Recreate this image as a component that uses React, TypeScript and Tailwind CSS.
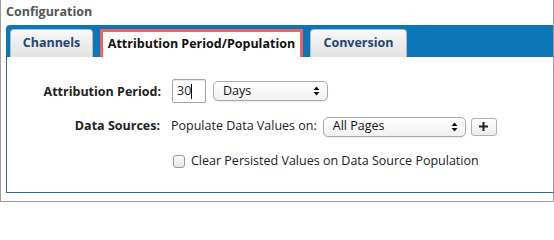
import React from "react";

function Arrows() {
  return (
    <svg width="7" height="10" viewBox="0 0 7 10" className="block">
      <path d="M3.5 0.5 L6.5 4 L0.5 4 Z" fill="#111" />
      <path d="M3.5 9.5 L6.5 6 L0.5 6 Z" fill="#111" />
    </svg>
  );
}

function Select({ label, w }: { label: string; w: string }) {
  return (
    <div
      className={`${w} h-[20px] flex items-center justify-between rounded-[5px] border border-[#a9a9a9] bg-gradient-to-b from-white to-[#f1f1f1] pl-[9px] pr-[7px] text-[12.5px] text-[#111] shadow-[0_1px_1px_rgba(0,0,0,0.08)]`}
    >
      <span>{label}</span>
      <Arrows />
    </div>
  );
}

export default function App() {
  return (
    <div
      className="w-[554px] h-[202px] bg-white border-l border-r border-b border-[#9c9c9c] flex flex-col"
      style={{ fontFamily: '"Open Sans", "Noto Sans", sans-serif' }}
    >
      <div className="h-[25px] pl-[5px] pt-[4px] text-[12.5px] font-bold leading-[16px] text-[#555]">
        Configuration
      </div>
      <div className="ml-[5px] flex flex-col">
        <div className="h-[32px] bg-[#0b76b8] rounded-tl-[4px] flex items-end pl-[4px]">
          <div className="h-[28px] w-[83px] flex items-center justify-center rounded-t-[4px] border border-b-0 border-[#b9b9b9] bg-gradient-to-b from-[#f8f8f8] to-[#e3e3e3] text-[12.5px] font-bold text-[#24466e]">
            Channels
          </div>
          <div className="ml-[7px] h-[31px] w-[203px] -mb-[3px] flex items-center justify-center border-[3px] border-[#f2625b] bg-white text-[12.5px] font-bold text-[#111]">
            Attribution Period/Population
          </div>
          <div className="ml-[7px] h-[28px] w-[97px] flex items-center justify-center rounded-t-[4px] border border-b-0 border-[#b9b9b9] bg-gradient-to-b from-[#f8f8f8] to-[#e3e3e3] text-[12.5px] font-bold text-[#24466e]">
            Conversion
          </div>
        </div>
        <div className="h-[136px] bg-white border-l border-b border-[#2e69a6] pt-[22px] text-[12.5px] text-[#222]">
          <div className="flex items-center h-[24px]">
            <div className="w-[154px] pt-[2px] text-right font-bold text-[#222]">Attribution Period:</div>
            <div className="ml-[11px] w-[34px] h-[24px] border border-[#a5a5a5] rounded-[2px] flex items-center pl-[4px] shadow-[inset_0_1px_1px_rgba(0,0,0,0.1)]">
              <span>30</span>
              <span className="w-px h-[15px] bg-black" />
            </div>
            <div className="ml-[7px]">
              <Select label="Days" w="w-[115px]" />
            </div>
          </div>
          <div className="flex items-center h-[19px] mt-[14px]">
            <div className="w-[153px] text-right font-bold text-[#222]">Data Sources:</div>
            <div className="ml-[11px]">Populate Data Values on:</div>
            <div className="ml-[6px]">
              <Select label="All Pages" w="w-[143px]" />
            </div>
            <div className="ml-[5px] w-[26px] h-[18px] rounded-[3px] border border-[#b0b0b0] bg-gradient-to-b from-white to-[#ececec] flex items-center justify-center">
              <svg width="9" height="9" viewBox="0 0 9 9">
                <path d="M3.5 0 H5.5 V3.5 H9 V5.5 H5.5 V9 H3.5 V5.5 H0 V3.5 H3.5 Z" fill="#222" />
              </svg>
            </div>
          </div>
          <div className="flex items-center mt-[16px] pl-[166px]">
            <div className="w-[12px] h-[13px] rounded-[3px] border border-[#9a9a9a] bg-gradient-to-b from-[#fbfbfb] to-[#e6e6e6]" />
            <div className="ml-[6px]">Clear Persisted Values on Data Source Population</div>
          </div>
        </div>
      </div>
    </div>
  );
}
